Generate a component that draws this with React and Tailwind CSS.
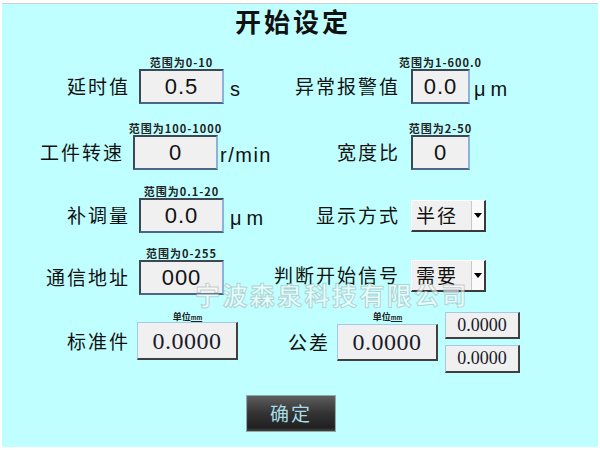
const cjk = "font-['Noto_Sans_CJK_SC',sans-serif]";

const Hint = ({ children }) => (
  <div className={`h-[12px] leading-[12px] text-[11px] font-semibold text-[#222] whitespace-nowrap tracking-[1px] mb-[1px] ${cjk}`}>
    {children}
  </div>
);

const Label = ({ children, w = "w-[128px]" }) => (
  <div className={`${w} h-[35px] flex items-center justify-end text-[19px] tracking-[2px] mr-[-2px] text-[#111] whitespace-nowrap ${cjk}`}>
    {children}
  </div>
);

// sunken entry box
const Entry = ({ value, w }) => (
  <div
    className={`${w} h-[35px] shrink-0 flex items-center justify-center bg-[#f0f0f0] border-2 border-t-[#3c4854] border-l-[#3c4854] border-r-[#8ab2dc] border-b-[#4c6688] text-[22px] tracking-[1px] text-[#111] font-['Liberation_Sans',sans-serif]`}
  >
    {value}
  </div>
);

const Unit = ({ children, className = "" }) => (
  <div className={`h-[35px] flex items-center pt-[4px] text-[20px] text-[#111] whitespace-nowrap font-['Liberation_Sans',sans-serif] ${className}`}>
    {children}
  </div>
);

const Field = ({ label, hint, value, unit, w, gap, unitClass }) => (
  <div className="flex items-end">
    <Label>{label}</Label>
    <div className={`flex flex-col items-center ${w} ${gap}`}>
      <Hint>{hint}</Hint>
      <Entry value={value} w={w} />
    </div>
    {unit && <Unit className={unitClass}>{unit}</Unit>}
  </div>
);

const Select = ({ label, value }) => (
  <div className="flex items-center">
    <Label>{label}</Label>
    <div className="ml-[13px] flex w-[75px] h-[32px] bg-[#f0f0f0] border-t border-l border-t-white border-l-white border-r-2 border-b-2 border-r-[#3a3a3a] border-b-[#3a3a3a]">
      <div className={`flex-1 pl-[4px] flex items-center text-[19px] tracking-[2px] text-[#111] ${cjk}`}>{value}</div>
      <div className="w-[13px] border-l border-[#c8c8c8] bg-[#fafafa] flex items-center justify-center">
        <div className="w-0 h-0 border-l-[4px] border-r-[4px] border-t-[5px] border-l-transparent border-r-transparent border-t-black"></div>
      </div>
    </div>
  </div>
);

const Raised = ({ value, w, h, size }) => (
  <div
    className={`${w} ${h} ${size} flex items-center justify-center bg-[#f0f0f0] border-t border-l border-t-[#a8c8e8] border-l-[#a8c8e8] border-r-2 border-b-2 border-r-[#404040] border-b-[#404040] text-[#1a1a2a] font-['Liberation_Serif',serif]`}
  >
    {value}
  </div>
);

const UnitHint = () => (
  <div className={`h-[10px] leading-[10px] text-[9px] font-bold text-[#222] whitespace-nowrap ${cjk}`}>
    单位<span className="text-[6px] underline">mm</span>
  </div>
);

export default function App() {
  return (
    <div className="w-[600px] h-[450px] bg-white pt-[3px] pl-[2px]">
      <div className="relative w-[596px] h-[444px] bg-[#c0ffff] border-t border-[#cfcfcf]">
        <div className={`mt-[2px] h-[30px] leading-[30px] text-center pr-[14px] text-[26px] font-bold tracking-[3px] text-[#111] ${cjk}`}>
          开始设定
        </div>

        {/* row 1 */}
        <div className="flex mt-[20px]">
          <div className="w-[270px]">
            <Field label="延时值" hint="范围为0-10" value="0.5" unit="s" w="w-[85px]" gap="ml-[11px]" unitClass="ml-[6px]" />
          </div>
          <Field label="异常报警值" hint="范围为1-600.0" value="0.0" unit="μm" w="w-[59px]" gap="ml-[13px]" unitClass="ml-[4px] tracking-[5px]" />
        </div>

        {/* row 2 */}
        <div className="flex mt-[18px]">
          <div className="w-[270px]">
            <Field label="工件转速" hint="范围为100-1000" value="0" unit="r/min" w="w-[85px]" gap="ml-[11px]" unitClass="ml-[2px] tracking-[1.5px]" />
          </div>
          <Field label="宽度比" hint="范围为2-50" value="0" w="w-[59px]" gap="ml-[13px]" />
        </div>

        {/* row 3 */}
        <div className="flex items-end mt-[15px]">
          <div className="w-[270px]">
            <Field label="补调量" hint="范围为0.1-20" value="0.0" unit="μm" w="w-[85px]" gap="ml-[11px]" unitClass="ml-[6px] tracking-[5px]" />
          </div>
          <Select label="显示方式" value="半径" />
        </div>

        {/* row 4 */}
        <div className="flex items-end mt-[14px]">
          <div className="w-[270px]">
            <Field label="通信地址" hint="范围为0-255" value="000" w="w-[85px]" gap="ml-[11px]" />
          </div>
          <div className="mb-[2px]">
            <Select label="判断开始信号" value="需要" />
          </div>
        </div>

        {/* row 5 */}
        <div className="flex items-start mt-[17px]">
          <div className="flex items-end">
            <div className="w-[128px] h-[38px] flex items-center justify-end mr-[-2px]">
              <span className={`text-[19px] tracking-[2px] text-[#111] ${cjk}`}>标准件</span>
            </div>
            <div className="ml-[9px] flex flex-col items-center">
              <UnitHint />
              <Raised value="0.0000" w="w-[101px]" h="h-[38px]" size="text-[24px] tracking-[0.5px]" />
            </div>
          </div>
          <div className="flex items-end">
            <div className="w-[92px] h-[37px] mt-[12px] flex items-center justify-end mr-[-2px]">
              <span className={`text-[19px] tracking-[2px] text-[#111] ${cjk}`}>公差</span>
            </div>
            <div className="ml-[9px] flex flex-col items-center">
              <UnitHint />
              <div className="mt-[2px]">
                <Raised value="0.0000" w="w-[101px]" h="h-[37px]" size="text-[24px] tracking-[0.5px]" />
              </div>
            </div>
          </div>
          <div className="ml-[7px] flex flex-col gap-[6px]">
            <Raised value="0.0000" w="w-[75px]" h="h-[27px]" size="text-[18px]" />
            <Raised value="0.0000" w="w-[75px]" h="h-[28px]" size="text-[18px]" />
          </div>
        </div>

        <div
          className={`ml-[244px] mt-[22px] w-[90px] h-[37px] flex items-center justify-center bg-linear-to-b from-[#5e5e5e] via-[#333333] to-[#1c1c1c] border border-[#8fa8a8] shadow-[inset_0_-2px_2px_rgba(255,255,255,0.15)] text-[#a8dce8] text-[19px] tracking-[2px] ${cjk}`}
        >
          确定
        </div>

        <div
          className={`absolute left-[193px] top-[277px] text-[25px] leading-[26px] tracking-[2.4px] font-bold text-white/60 whitespace-nowrap [-webkit-text-stroke:1px_rgba(150,170,170,0.55)] pointer-events-none ${cjk}`}
        >
          宁波森泉科技有限公司
        </div>
      </div>
    </div>
  );
}
